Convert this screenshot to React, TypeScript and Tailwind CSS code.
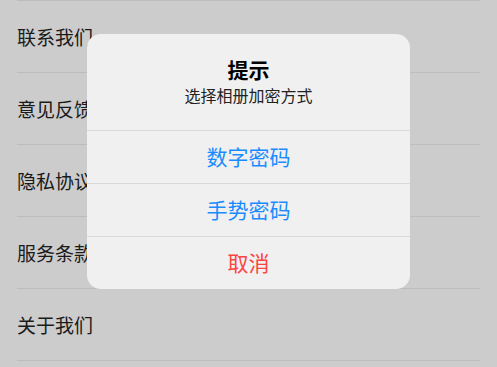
const items = ["联系我们", "意见反馈", "隐私协议", "服务条款", "关于我们"];

const font = { fontFamily: '"Noto Sans CJK SC", "Noto Sans", sans-serif' };

const Row = ({ label }: { label: string }) => {
  return (
    <div className="h-[72px] border-b border-[#bdbdbd] flex items-center">
      <span className="text-[19px] text-[#1a1a1a] leading-none">{label}</span>
    </div>
  );
};

const ActionButton = ({ label, color }: { label: string; color: string }) => {
  return (
    <button className={`h-[52px] w-full flex items-center justify-center text-[21px] ${color}`}>
      {label}
    </button>
  );
};

export default function App() {
  return (
    <div className="relative w-[497px] h-[367px] overflow-hidden bg-[#cccccc]" style={font}>
      <div className="mx-[17px] border-t border-[#bdbdbd]">
        {items.map((item) => (
          <Row key={item} label={item} />
        ))}
      </div>

      <div className="absolute left-[87px] top-[34px] w-[323px] rounded-[14px] bg-[#f0f0f0] overflow-hidden">
        <div className="h-[96px] flex flex-col items-center pt-[23px]">
          <div className="text-[21px] leading-[25px] font-bold text-black">提示</div>
          <div className="mt-[2px] text-[16px] leading-[22px] text-[#222222]">选择相册加密方式</div>
        </div>
        <div className="border-t border-[#d9d9d9]">
          <ActionButton label="数字密码" color="text-[#1a8cff]" />
        </div>
        <div className="border-t border-[#d9d9d9]">
          <ActionButton label="手势密码" color="text-[#1a8cff]" />
        </div>
        <div className="border-t border-[#d9d9d9]">
          <ActionButton label="取消" color="text-[#fa4541]" />
        </div>
      </div>
    </div>
  );
}
